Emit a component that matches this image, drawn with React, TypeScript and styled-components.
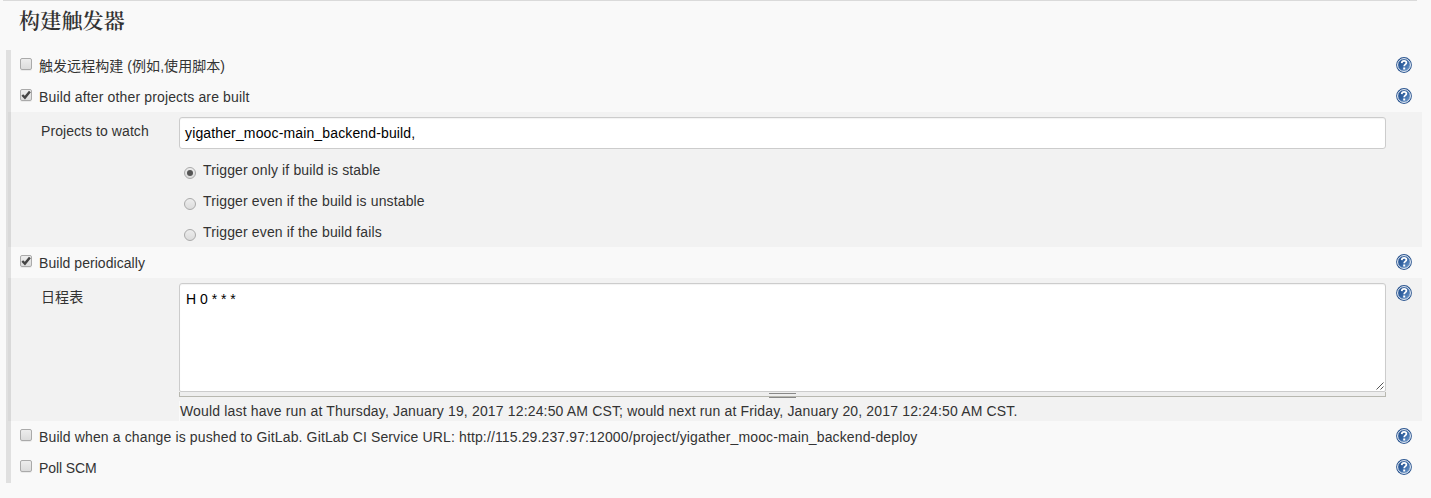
import React from 'react';
import styled, { createGlobalStyle } from 'styled-components';

const GlobalStyle = createGlobalStyle`
  * { box-sizing: border-box; }
  body {
    margin: 0;
    background: #f9f9f9;
    color: #333;
    font: 14px/20px "Liberation Sans", "Noto Sans CJK SC", sans-serif;
    overflow: hidden;
  }
`;

const Page = styled.main`
  height: 498px;
  padding: 0 9px 0 6px;
`;

const Rule = styled.div`
  height: 1px;
  margin: 0 5px 0 -3px;
  background: #dadada;
`;

const Heading = styled.h2`
  height: 49px;
  margin: 0;
  padding: 4px 0 0 13px;
  font: 600 21px/28px "Noto Serif CJK SC", "Noto Sans CJK SC", serif;
  letter-spacing: 0.2px;
`;

const Section = styled.section`
  border-left: 5px solid #e0e0e0;
`;

const OptionRow = styled.div`
  display: flex;
  align-items: flex-start;
  height: 31px;
  padding: 7px 10px 0 9px;
`;

const OptionLabel = styled.span<{ $spacing?: number }>`
  flex: 1;
  margin: -1px 0 0 7px;
  line-height: 20px;
  white-space: pre;
  letter-spacing: ${(p) => p.$spacing ?? 0}px;
`;

const Panel = styled.div<{ $height: number }>`
  display: grid;
  grid-template-columns: 138px 1207px 16px;
  column-gap: 0;
  height: ${(p) => p.$height}px;
  margin-left: -3px;
  padding: 5px 10px 0 33px;
  background: rgba(0, 0, 0, 0.028);
`;

const FieldLabel = styled.div`
  padding-top: 4px;
  letter-spacing: 0.07px;
`;

const Field = styled.div`
  min-width: 0;
`;

const HelpCell = styled.div`
  padding: 2px 0 0 10px;
`;

const TextInput = styled.div`
  height: 32px;
  padding: 5px;
  border: 1px solid #ccc;
  border-radius: 3px;
  background: #fff;
  color: #000;
  letter-spacing: 0.14px;
  box-shadow: inset 0 1px 1px rgba(0, 0, 0, 0.05);
`;

const RadioRow = styled.div`
  display: flex;
  height: 31px;
  padding-left: 5px;
`;

const RadioList = styled.div`
  padding-top: 11px;
`;

const RadioLabel = styled.span`
  margin-left: 7px;
  letter-spacing: 0.14px;
`;

const Radio = styled.span<{ $on?: boolean }>`
  display: flex;
  align-items: center;
  justify-content: center;
  width: 12px;
  height: 12px;
  margin-top: 7px;
  border: 1px solid #aaa;
  border-radius: 50%;
  background: linear-gradient(#ededed, #dcdcdc);

  &::after {
    content: '';
    width: 6px;
    height: 6px;
    border-radius: 50%;
    background: ${(p) => (p.$on ? '#555' : 'transparent')};
  }
`;

const Box = styled.span`
  flex: none;
  width: 12px;
  height: 12px;
  margin-top: 1px;
  border: 1px solid #aaa;
  border-radius: 2px;
  background: linear-gradient(#ededed, #dcdcdc);
  box-shadow: 0 1px 0 rgba(0, 0, 0, 0.06);

  svg { display: block; }
`;

const TextArea = styled.div`
  display: flex;
  flex-direction: column;
  justify-content: space-between;
  height: 109px;
  padding: 5px 1px 1px 6px;
  border: 1px solid #ccc;
  border-radius: 3px 3px 2px 2px;
  background: #fff;
  color: #000;
  box-shadow: inset 0 1px 1px rgba(0, 0, 0, 0.05);
`;

const Grip = styled.svg`
  display: block;
  align-self: flex-end;
`;

const ResizeHandle = styled.div`
  display: flex;
  justify-content: center;
  height: 5px;
  border: solid #b8b8b0;
  border-width: 0 1px 1px;
  background: #eee;

  &::before {
    content: '';
    width: 27px;
    height: 3px;
    margin-top: 1px;
    border: solid #888;
    border-width: 1px 0;
  }
`;

const Hint = styled.div`
  display: flex;
  height: 20px;
  margin-top: 4px;
  border-left: 1px solid #fafafa;
  white-space: pre;
  letter-spacing: 0.158px;
`;

const HelpSvg = styled.svg`
  display: block;
  flex: none;
`;

function HelpIcon() {
  return (
    <HelpSvg width="16" height="16" viewBox="0 0 16 16">
      <defs>
        <linearGradient id="help" x1="0" y1="0" x2="1" y2="1">
          <stop offset="0" stopColor="#204a87" />
          <stop offset="0.5" stopColor="#3465a4" />
          <stop offset="1" stopColor="#7fa6d4" />
        </linearGradient>
      </defs>
      <circle cx="8" cy="8" r="7.9" fill="#2d5791" />
      <circle cx="8" cy="8" r="6.4" fill="url(#help)" stroke="#f4f7fb" strokeWidth="1" />
      <path d="M5.7 6.1C5.8 4.5 6.7 3.8 8.1 3.8c1.5 0 2.3.8 2.3 1.9 0 1.7-2.2 1.7-2.2 3.5" fill="none" stroke="#fff" strokeWidth="1.8" />
      <rect x="7.2" y="10.5" width="2" height="2" fill="#fff" />
    </HelpSvg>
  );
}

function Checkbox({ checked }: { checked?: boolean }) {
  return (
    <Box>
      {checked && (
        <svg width="10" height="10" viewBox="0 0 10 10">
          <path d="M1.3 5 3.9 7.6 8.9 1.4" fill="none" stroke="#444" strokeWidth="2.4" />
        </svg>
      )}
    </Box>
  );
}

interface OptionProps {
  label: string;
  checked?: boolean;
  spacing?: number;
}

function Option({ label, checked, spacing }: OptionProps) {
  return (
    <OptionRow>
      <Checkbox checked={checked} />
      <OptionLabel $spacing={spacing}>{label}</OptionLabel>
      <HelpIcon />
    </OptionRow>
  );
}

const conditions = [
  'Trigger only if build is stable',
  'Trigger even if the build is unstable',
  'Trigger even if the build fails',
];

export default function App() {
  return (
    <>
      <GlobalStyle />
      <Page>
        <Rule />
        <Heading>构建触发器</Heading>
        <Section>
          <Option label="触发远程构建 (例如,使用脚本)" spacing={0.06} />
          <Option label="Build after other projects are built" checked spacing={0.14} />
          <Panel $height={135}>
            <FieldLabel>Projects to watch</FieldLabel>
            <Field>
              <TextInput>yigather_mooc-main_backend-build,</TextInput>
              <RadioList>
                {conditions.map((text, i) => (
                  <RadioRow key={text}>
                    <Radio $on={i === 0} />
                    <RadioLabel>{text}</RadioLabel>
                  </RadioRow>
                ))}
              </RadioList>
            </Field>
          </Panel>
          <Option label="Build periodically" checked spacing={0.05} />
          <Panel $height={143}>
            <FieldLabel>日程表</FieldLabel>
            <Field>
              <TextArea>
                <span>H 0 * * *</span>
                <Grip width="8" height="8" viewBox="0 0 8 8">
                  <path d="M0.5 7.5 7.5 0.5M4.5 7.5 7.5 4.5" stroke="#555" fill="none" />
                </Grip>
              </TextArea>
              <ResizeHandle />
              <Hint>Would last have run at Thursday, January 19, 2017 12:24:50 AM CST; would next run at Friday, January 20, 2017 12:24:50 AM CST.</Hint>
            </Field>
            <HelpCell>
              <HelpIcon />
            </HelpCell>
          </Panel>
          <Option
            label="Build when a change is pushed to GitLab. GitLab CI Service URL: http://115.29.237.97:12000/project/yigather_mooc-main_backend-deploy"
            spacing={0.13}
          />
          <Option label="Poll SCM" spacing={-0.08} />
        </Section>
      </Page>
    </>
  );
}
